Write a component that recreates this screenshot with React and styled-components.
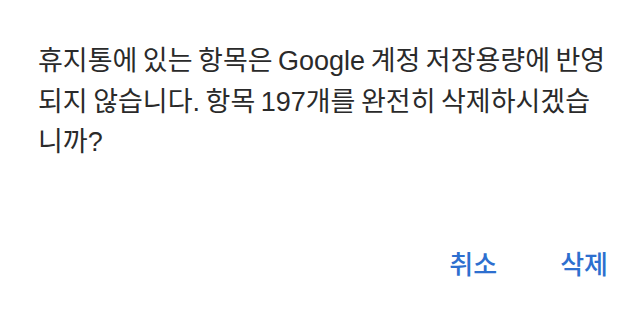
import React from "react";
import styled, { createGlobalStyle } from "styled-components";

const Global = createGlobalStyle`
  html, body {
    margin: 0;
    padding: 0;
    background: #ffffff;
  }
  body {
    font-family: "Liberation Sans", "Noto Sans CJK KR", sans-serif;
  }
`;

const Dialog = styled.div`
  width: 644px;
  height: 309px;
  box-sizing: border-box;
  padding: 41px 30px 0 38px;
  display: flex;
  flex-direction: column;
  background: #fff;
`;

const Message = styled.p`
  margin: 0;
  font-size: 27px;
  line-height: 40.5px;
  word-spacing: -2px;
  color: #2a2a2a;
`;

const Actions = styled.div`
  margin-top: auto;
  margin-bottom: 31px;
  display: flex;
  justify-content: flex-end;
  gap: 63px;
  margin-right: 6px;
`;

const ActionButton = styled.button`
  border: none;
  background: none;
  padding: 0;
  font-family: "Noto Sans CJK KR", sans-serif;
  font-size: 26px;
  line-height: 30px;
  font-weight: 500;
  color: #2d6fcf;
  cursor: pointer;
`;

export default function App() {
  return (
    <>
      <Global />
      <Dialog>
        <Message>
          휴지통에 있는 항목은 Google 계정 저장용량에 반영되지 않습니다. 항목 197개를 완전히 삭제하시겠습니까?
        </Message>
        <Actions>
          <ActionButton>취소</ActionButton>
          <ActionButton>삭제</ActionButton>
        </Actions>
      </Dialog>
    </>
  );
}
